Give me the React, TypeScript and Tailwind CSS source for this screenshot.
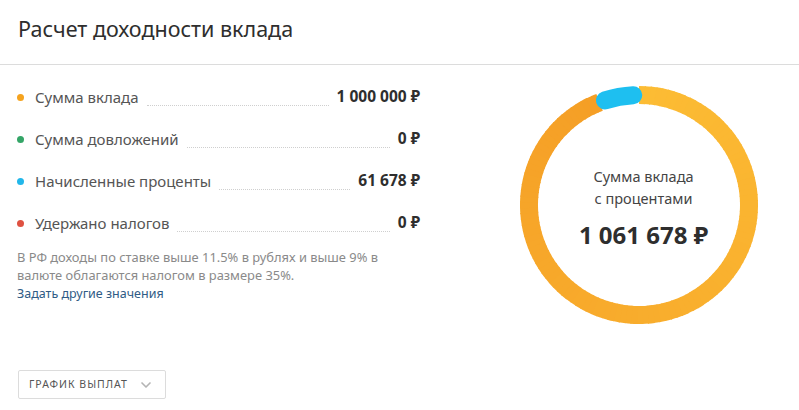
import React from 'react';
import { ChevronDown } from 'lucide-react';

const rows = [
  { label: 'Сумма вклада', value: '1 000 000 ₽', dot: 'bg-[#f5a31f]' },
  { label: 'Сумма довложений', value: '0 ₽', dot: 'bg-[#34a567]' },
  { label: 'Начисленные проценты', value: '61 678 ₽', dot: 'bg-[#22b7ea]' },
  { label: 'Удержано налогов', value: '0 ₽', dot: 'bg-[#df5141]' },
];

const SIZE = 238;
const C = SIZE / 2;
const R = 110;

const pt = (deg: number) => {
  const a = (deg * Math.PI) / 180;
  return [C + R * Math.sin(a), C - R * Math.cos(a)];
};

const arc = (from: number, to: number) => {
  const [x1, y1] = pt(from);
  const [x2, y2] = pt(to);
  const large = to - from > 180 ? 1 : 0;
  return `M ${x1} ${y1} A ${R} ${R} 0 ${large} 1 ${x2} ${y2}`;
};

// light yellow at the top, going clockwise to a deeper orange
const mix = (t: number) => {
  const a = [252, 188, 52];
  const b = [245, 159, 38];
  const c = a.map((v, i) => Math.round(v + (b[i] - v) * t));
  return `rgb(${c[0]},${c[1]},${c[2]})`;
};

const Donut: React.FC = () => {
  const end = 339;
  const steps = 120;
  const segs = Array.from({ length: steps }).map((_, i) => {
    const from = (end / steps) * i;
    const to = Math.min(end, from + end / steps + 0.6);
    return <path key={i} d={arc(from, to)} stroke={mix(i / (steps - 1))} strokeWidth={18} fill="none" />;
  });
  return (
    <svg width={SIZE} height={SIZE} viewBox={`0 0 ${SIZE} ${SIZE}`} className="absolute inset-0">
      {segs}
      <path d={arc(342, 357)} stroke="#1ebff0" strokeWidth={18} strokeLinecap="round" fill="none" />
    </svg>
  );
};

export default function App() {
  return (
    <div className="w-[799px] h-[410px] bg-white font-['Noto_Sans',sans-serif] overflow-hidden">
      {/* Header */}
      <div className="h-[65px] border-b border-[#dcdcdc] pl-[18px] pt-[13px]">
        <h1 className="text-[21.5px] leading-[32px] text-[#2e2e2e]">Расчет доходности вклада</h1>
      </div>

      <div className="flex">
        {/* Left column */}
        <div className="w-[420px] pl-[17px] pt-[11px]">
          {rows.map((r) => (
            <div key={r.label} className="flex items-center h-[42px]">
              <span className={`w-[7px] h-[7px] rounded-full ${r.dot}`} />
              <span className="ml-[11px] text-[15px] text-[#555]">{r.label}</span>
              <span className="flex-1 mx-[8px] self-end mb-[12px] border-b border-dotted border-[#cfcfcf]" />
              <span className="text-[15.5px] font-bold text-[#2e2e2e]">{r.value}</span>
            </div>
          ))}

          <p className="mt-[4px] text-[12.9px] leading-[18px] text-[#8a8a8a]">
            В РФ доходы по ставке выше 11.5% в рублях и выше 9% в
            <br />
            валюте облагаются налогом в размере 35%.
          </p>
          <a className="block text-[12.5px] leading-[19px] text-[#2f5b85]">Задать другие значения</a>

          <button className="mt-[67px] ml-[1px] h-[29px] w-[148px] flex items-center justify-between pl-[10px] pr-[11px] border border-[#dcdcdc] rounded-[2px]">
            <span className="text-[10.5px] tracking-[1px] text-[#555]">ГРАФИК ВЫПЛАТ</span>
            <ChevronDown size={16} strokeWidth={2.5} color="#b4b4b4" />
          </button>
        </div>

        {/* Right column */}
        <div className="flex-1 pl-[100px] pt-[21px]">
          <div className="relative w-[238px] h-[238px]">
            <Donut />
            <div className="absolute inset-0 flex flex-col items-center justify-center text-center pt-[4px] pl-[9px]">
              <span className="text-[14.5px] leading-[22px] text-[#444]">Сумма вклада</span>
              <span className="text-[14.5px] leading-[22px] text-[#444]">с процентами</span>
              <span className="mt-[12px] text-[24px] leading-[28px] font-bold text-[#2e2e2e]">1 061 678 ₽</span>
            </div>
          </div>
        </div>
      </div>
    </div>
  );
}
